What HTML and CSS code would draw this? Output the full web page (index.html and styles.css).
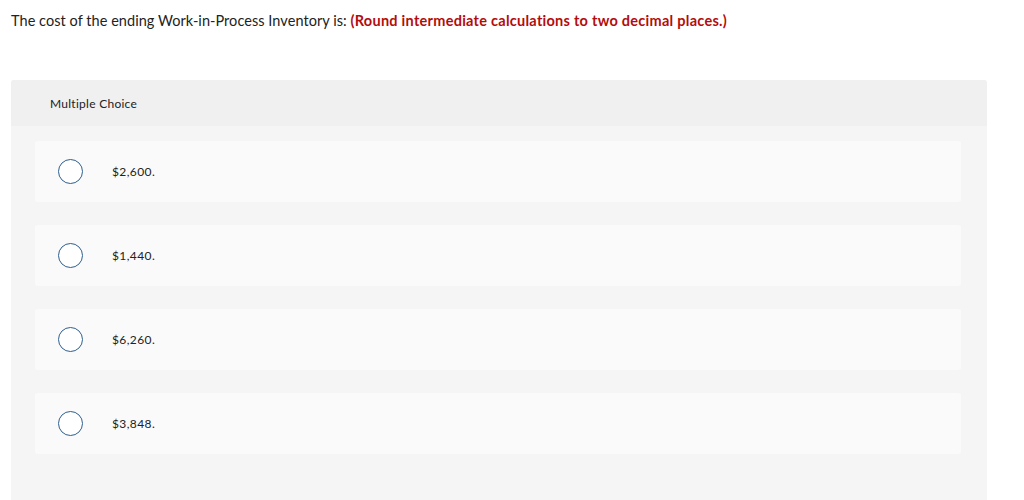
FILE: index.html
```html
<!DOCTYPE html>
<html>
<head>
<meta charset="utf-8">
<link rel="stylesheet" href="styles.css">
</head>
<body>
<p class="prompt">The cost of the ending Work-in-Process Inventory is: <strong class="hint">(Round intermediate calculations to two decimal places.)</strong></p>
<div class="panel">
  <div class="panel-head">Multiple Choice</div>
  <div class="options">
    <label class="option"><span class="radio"></span><span class="opt-text">$2,600.</span></label>
    <label class="option"><span class="radio"></span><span class="opt-text">$1,440.</span></label>
    <label class="option"><span class="radio"></span><span class="opt-text">$6,260.</span></label>
    <label class="option"><span class="radio"></span><span class="opt-text">$3,848.</span></label>
  </div>
</div>
</body>
</html>
```
FILE: styles.css
```css
html, body { margin: 0; padding: 0; background: #fff; }
body {
  font-family: "Lato", "Open Sans", sans-serif;
  color: #222;
  padding: 0 37px 0 11px;
}
.prompt {
  margin: 0;
  padding-top: 12px;
  font-size: 14.5px;
  letter-spacing: 0.05px;
  line-height: 18px;
  height: 68px;
  white-space: nowrap;
}
.hint { color: #b40c0c; font-weight: 700; letter-spacing: 0.27px; }
.panel {
  background: #f5f5f5;
  border-radius: 3px 3px 0 0;
  height: 440px;
}
.panel-head {
  background: #f0f0f0;
  height: 46px;
  border-radius: 3px 3px 0 0;
  display: flex;
  align-items: center;
  padding-left: 39px;
  font-size: 12px;
  letter-spacing: 0.27px;
}
.options {
  display: flex;
  flex-direction: column;
  gap: 23px;
  padding: 15px 26px 0 24px;
}
.option {
  background: #fafafa;
  height: 61px;
  border-radius: 3px;
  display: flex;
  align-items: center;
  padding-left: 23px;
}
.radio {
  width: 23px;
  height: 23px;
  border: 1.3px solid #2f5f90;
  border-radius: 50%;
  background: #fff;
  box-sizing: content-box;
}
.opt-text {
  margin-left: 29px;
  font-size: 12px;
  letter-spacing: 0.4px;
}
```
